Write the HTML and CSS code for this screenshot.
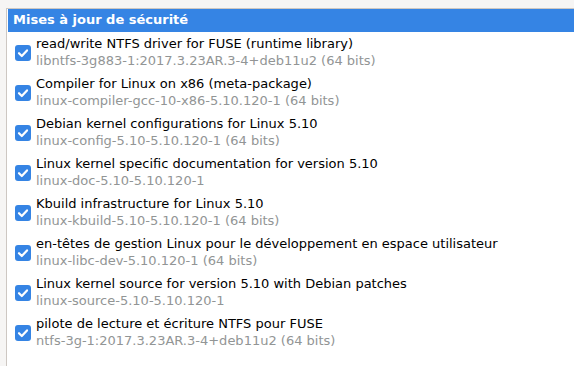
FILE: index.html
```html
<!DOCTYPE html>
<html lang="fr">
<head>
    <meta charset="UTF-8">
    <title>Mises à jour</title>
    <link rel="stylesheet" href="styles.css">
</head>
<body>
    <div class="frame">
        <div class="header">Mises à jour de sécurité</div>
        <div class="list">
            <label class="row">
                <span class="check"><svg viewBox="0 0 16 16"><path d="M4 8.2l2.8 2.8 5.2-5.6" /></svg></span>
                <span class="text">
                    <span class="title">read/write NTFS driver for FUSE (runtime library)</span>
                    <span class="sub">libntfs-3g883-1:2017.3.23AR.3-4+deb11u2 (64 bits)</span>
                </span>
            </label>
            <label class="row">
                <span class="check"><svg viewBox="0 0 16 16"><path d="M4 8.2l2.8 2.8 5.2-5.6" /></svg></span>
                <span class="text">
                    <span class="title">Compiler for Linux on x86 (meta-package)</span>
                    <span class="sub">linux-compiler-gcc-10-x86-5.10.120-1 (64 bits)</span>
                </span>
            </label>
            <label class="row">
                <span class="check"><svg viewBox="0 0 16 16"><path d="M4 8.2l2.8 2.8 5.2-5.6" /></svg></span>
                <span class="text">
                    <span class="title">Debian kernel configurations for Linux 5.10</span>
                    <span class="sub">linux-config-5.10-5.10.120-1 (64 bits)</span>
                </span>
            </label>
            <label class="row">
                <span class="check"><svg viewBox="0 0 16 16"><path d="M4 8.2l2.8 2.8 5.2-5.6" /></svg></span>
                <span class="text">
                    <span class="title">Linux kernel specific documentation for version 5.10</span>
                    <span class="sub">linux-doc-5.10-5.10.120-1</span>
                </span>
            </label>
            <label class="row">
                <span class="check"><svg viewBox="0 0 16 16"><path d="M4 8.2l2.8 2.8 5.2-5.6" /></svg></span>
                <span class="text">
                    <span class="title">Kbuild infrastructure for Linux 5.10</span>
                    <span class="sub">linux-kbuild-5.10-5.10.120-1 (64 bits)</span>
                </span>
            </label>
            <label class="row">
                <span class="check"><svg viewBox="0 0 16 16"><path d="M4 8.2l2.8 2.8 5.2-5.6" /></svg></span>
                <span class="text">
                    <span class="title">en-têtes de gestion Linux pour le développement en espace utilisateur</span>
                    <span class="sub">linux-libc-dev-5.10.120-1 (64 bits)</span>
                </span>
            </label>
            <label class="row">
                <span class="check"><svg viewBox="0 0 16 16"><path d="M4 8.2l2.8 2.8 5.2-5.6" /></svg></span>
                <span class="text">
                    <span class="title">Linux kernel source for version 5.10 with Debian patches</span>
                    <span class="sub">linux-source-5.10-5.10.120-1</span>
                </span>
            </label>
            <label class="row">
                <span class="check"><svg viewBox="0 0 16 16"><path d="M4 8.2l2.8 2.8 5.2-5.6" /></svg></span>
                <span class="text">
                    <span class="title">pilote de lecture et écriture NTFS pour FUSE</span>
                    <span class="sub">ntfs-3g-1:2017.3.23AR.3-4+deb11u2 (64 bits)</span>
                </span>
            </label>
        </div>
    </div>
</body>
</html>
```

FILE: styles.css
```css
* {
    box-sizing: border-box;
    margin: 0;
    padding: 0;
}

body {
    background: #f6f5f4;
    font-family: "DejaVu Sans", sans-serif;
    font-size: 13px;
    padding: 8px 0 0 6px;
    height: 100vh;
    overflow: hidden;
}

.frame {
    background: #fff;
    border-top: 1px solid #cdc7c2;
    border-left: 1px solid #cdc7c2;
    height: 100%;
}

.header {
    background: #3584e4;
    color: #fff;
    font-weight: bold;
    height: 23px;
    line-height: 22px;
    padding-left: 5px;
    margin-left: 1px;
}

.row {
    display: flex;
    align-items: center;
    height: 40px;
    padding-left: 8px;
}

.check {
    width: 16px;
    height: 16px;
    border-radius: 3px;
    background: #3584e4;
    flex: none;
    margin-right: 5px;
    margin-top: 1px;
}

.check svg {
    display: block;
    width: 16px;
    height: 16px;
    fill: none;
    stroke: #fff;
    stroke-width: 2.2;
    stroke-linecap: round;
    stroke-linejoin: round;
}

.text {
    display: flex;
    flex-direction: column;
}

.title {
    color: #000;
    line-height: 16px;
    white-space: nowrap;
}

.sub {
    color: #929595;
    line-height: 17px;
    white-space: nowrap;
}
```
